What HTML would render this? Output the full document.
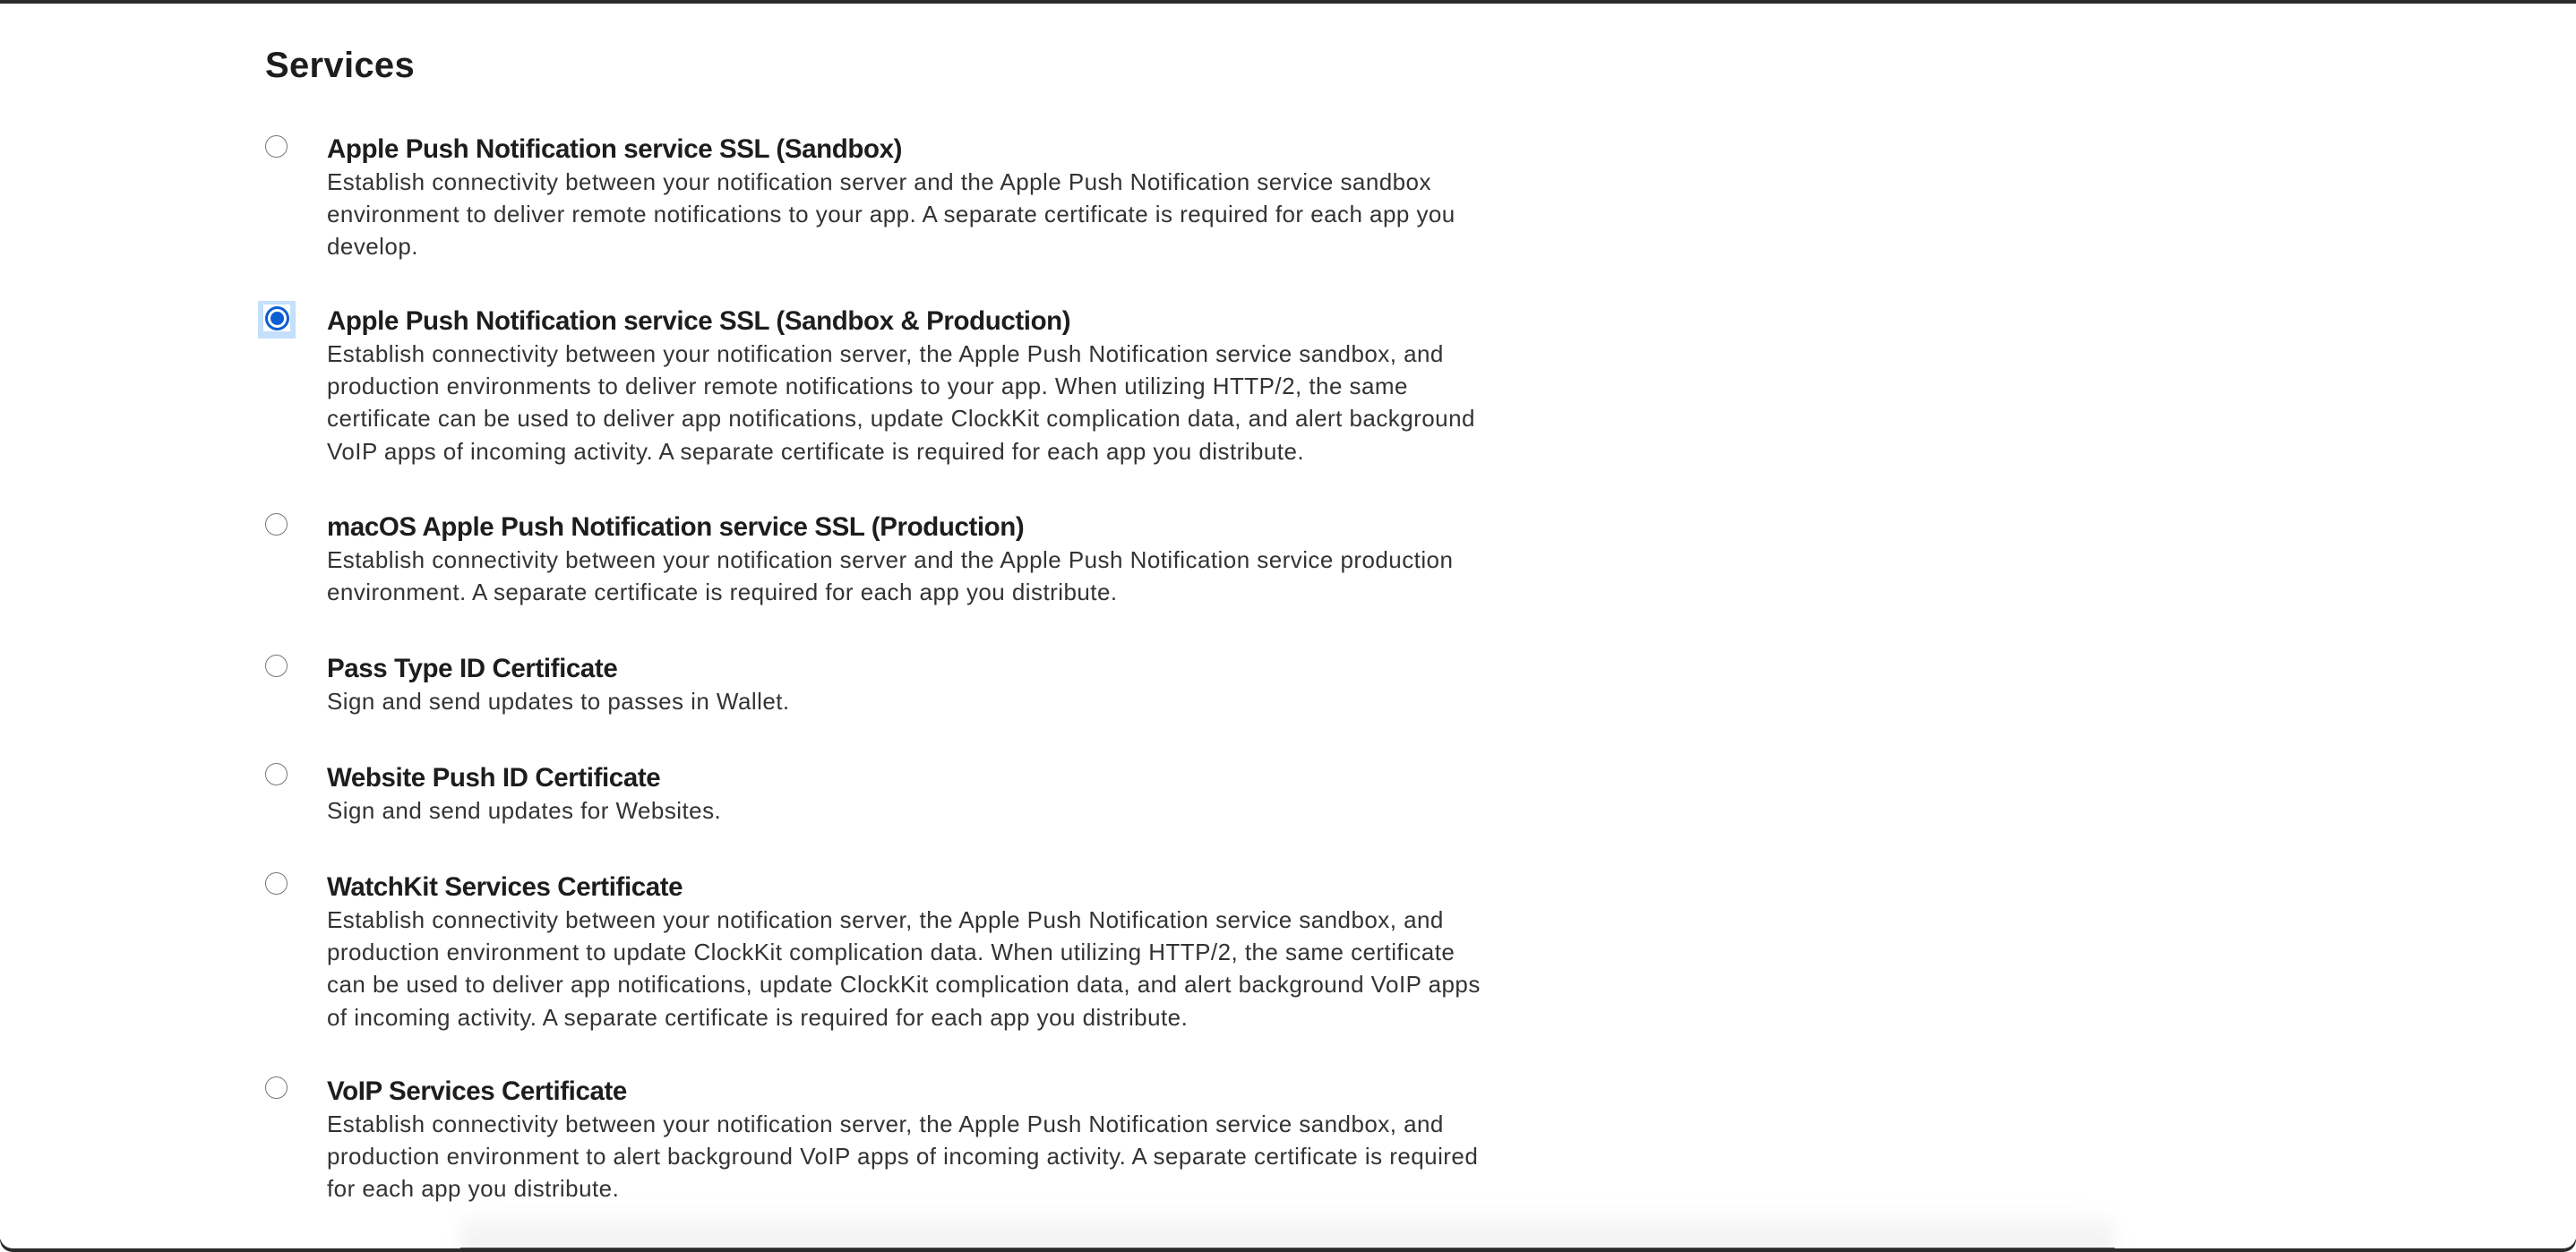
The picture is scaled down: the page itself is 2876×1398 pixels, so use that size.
<!DOCTYPE html>
<html><head><meta charset="utf-8"><style>
html,body{margin:0;padding:0;background:#fff;}
body{width:2876px;height:1398px;position:relative;overflow:hidden;font-family:"Liberation Sans",sans-serif;}
.topbar{position:absolute;left:0;top:0;width:2876px;height:4px;background:#2b2b2b;}
h1{position:absolute;left:296px;top:48px;margin:0;font-size:40px;font-weight:bold;color:#1d1d1f;line-height:50px;letter-spacing:0.3px;z-index:2;}
.item{position:absolute;left:365px;white-space:nowrap;z-index:2;}
.t{font-size:29.5px;font-weight:bold;color:#1d1d1f;line-height:37px;letter-spacing:-0.4px;}
.d{font-size:26px;color:#333;line-height:36.2px;letter-spacing:0.45px;}
.r{position:absolute;left:296px;width:23px;height:23px;border:1.5px solid #777;border-radius:50%;background:#fff;}
.focus{position:absolute;left:288px;top:336px;width:42px;height:42px;background:#c5dffc;}
.sel{position:absolute;left:294px;top:340px;width:30px;height:30px;background:#fff;}
.sr{position:absolute;left:296px;top:342px;width:21px;height:21px;border:3px solid #0b5fd3;border-radius:50%;background:#fff;}
.sr:after{content:"";position:absolute;left:3px;top:3px;width:15px;height:15px;border-radius:50%;background:#0b5fd3;}
.shadow{position:absolute;left:514px;top:1345px;width:1847px;height:53px;background:linear-gradient(#fff,#efefef);border-radius:30px 30px 0 0;filter:blur(8px);z-index:1;}
.botw{position:absolute;left:0;top:1380px;width:2876px;height:14px;background:transparent;border-radius:0 0 14px 14px;box-shadow:0 4px 0 #2b2b2b;z-index:3;}
.bar2{position:absolute;left:514px;top:1393px;width:1847px;height:5px;background:#555;z-index:3;}
</style></head><body>
<div class="topbar"></div>
<h1>Services</h1>

<div class="r" style="top:151px"></div>
<div class="item" style="top:148px"><div class="t">Apple Push Notification service SSL (Sandbox)</div><div class="d">Establish connectivity between your notification server and the Apple Push Notification service sandbox<br>environment to deliver remote notifications to your app. A separate certificate is required for each app you<br>develop.</div></div>

<div class="focus"></div><div class="sel"></div><div class="sr"></div>
<div class="item" style="top:340px"><div class="t">Apple Push Notification service SSL (Sandbox &amp; Production)</div><div class="d">Establish connectivity between your notification server, the Apple Push Notification service sandbox, and<br>production environments to deliver remote notifications to your app. When utilizing HTTP/2, the same<br>certificate can be used to deliver app notifications, update ClockKit complication data, and alert background<br>VoIP apps of incoming activity. A separate certificate is required for each app you distribute.</div></div>

<div class="r" style="top:573px"></div>
<div class="item" style="top:570px"><div class="t">macOS Apple Push Notification service SSL (Production)</div><div class="d">Establish connectivity between your notification server and the Apple Push Notification service production<br>environment. A separate certificate is required for each app you distribute.</div></div>

<div class="r" style="top:731px"></div>
<div class="item" style="top:728px"><div class="t">Pass Type ID Certificate</div><div class="d">Sign and send updates to passes in Wallet.</div></div>

<div class="r" style="top:852px"></div>
<div class="item" style="top:850px"><div class="t">Website Push ID Certificate</div><div class="d">Sign and send updates for Websites.</div></div>

<div class="r" style="top:974px"></div>
<div class="item" style="top:972px"><div class="t">WatchKit Services Certificate</div><div class="d">Establish connectivity between your notification server, the Apple Push Notification service sandbox, and<br>production environment to update ClockKit complication data. When utilizing HTTP/2, the same certificate<br>can be used to deliver app notifications, update ClockKit complication data, and alert background VoIP apps<br>of incoming activity. A separate certificate is required for each app you distribute.</div></div>

<div class="r" style="top:1202px"></div>
<div class="item" style="top:1200px"><div class="t">VoIP Services Certificate</div><div class="d">Establish connectivity between your notification server, the Apple Push Notification service sandbox, and<br>production environment to alert background VoIP apps of incoming activity. A separate certificate is required<br>for each app you distribute.</div></div>

<div class="shadow"></div>
<div class="bar2"></div>
<div class="botw"></div>
</body></html>
